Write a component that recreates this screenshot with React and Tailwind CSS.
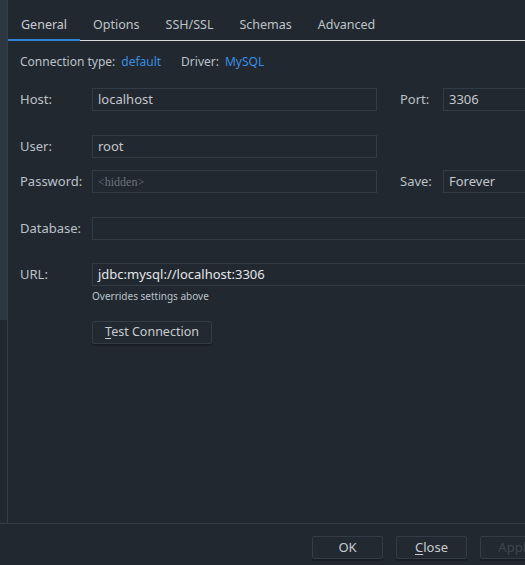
const tabs = ["General", "Options", "SSH/SSL", "Schemas", "Advanced"];

function Field({ value, placeholder, className = "", bright }) {
  return (
    <div
      className={`h-[23px] shrink-0 border border-[#323c46] bg-[#212830] flex items-center px-[5px] text-[13px] ${
        bright ? "text-[#e4e6e8]" : "text-[#c3c7cb]"
      } ${className}`}
    >
      {value}
      {placeholder && (
        <span className="text-[#6c737a] text-[12px]" style={{ fontFamily: '"Liberation Serif", "DejaVu Serif", serif' }}>
          {placeholder}
        </span>
      )}
    </div>
  );
}

function Label({ children, className = "" }) {
  return <span className={`shrink-0 text-[13px] text-[#bcc2c8] ${className}`}>{children}</span>;
}

function Btn({ children, disabled }) {
  return (
    <button
      className={`h-[23px] w-[71px] shrink-0 rounded-[2px] border border-[#343d47] bg-[#222931] shadow-[0_2px_1px_rgba(0,0,0,0.25)] text-[13px] ${
        disabled ? "text-[#3e464f]" : "text-[#c8ccd0]"
      }`}
    >
      {children}
    </button>
  );
}

export default function App() {
  return (
    <div
      className="w-[525px] h-[565px] overflow-hidden bg-[#212830] flex flex-col"
      style={{ fontFamily: '"Noto Sans", "Open Sans", sans-serif' }}
    >
      <div className="flex h-[524px] shrink-0 border-b border-[#323c46]">
        {/* scroll strip */}
        <div className="w-[8px] shrink-0 border-r border-[#323c46] flex flex-col">
          <div className="h-[320px] bg-[#2d3740]" />
        </div>

        <div className="flex-1 min-w-0 overflow-hidden">
          {/* TABS */}
          <div className="flex h-[41px] border-b border-[#d8dadc]">
            {tabs.map((t, i) => (
              <div
                key={t}
                className={`px-[13px] flex items-center pt-[11px] text-[12.5px] ${
                  i === 0 ? "text-[#c9ccd0] border-b-2 border-[#2f7fd6] mb-[-1px]" : "text-[#bfc3c7]"
                }`}
              >
                {t}
              </div>
            ))}
          </div>

          <div className="pl-[12px]">
            <div className="flex items-center h-[38px] text-[12px] text-[#bcc2c8] pt-[3px]">
              <span>Connection type:</span>
              <span className="ml-[6px] text-[#3c8ee0]">default</span>
              <span className="ml-[20px]">Driver:</span>
              <span className="ml-[6px] text-[#3c8ee0]">MySQL</span>
            </div>

            <div className="mt-[9px] flex items-center">
              <Label className="w-[72px]">Host:</Label>
              <Field value="localhost" className="w-[285px]" />
              <Label className="ml-[23px] w-[43px]">Port:</Label>
              <Field value="3306" className="w-[120px]" />
            </div>

            <div className="mt-[24px] flex items-center">
              <Label className="w-[72px]">User:</Label>
              <Field value="root" className="w-[285px]" />
            </div>

            <div className="mt-[12px] flex items-center">
              <Label className="w-[72px]">Password:</Label>
              <Field placeholder="<hidden>" className="w-[285px]" />
              <Label className="ml-[23px] w-[43px]">Save:</Label>
              <Field value="Forever" className="w-[120px]" />
            </div>

            <div className="mt-[24px] flex items-center">
              <Label className="w-[72px]">Database:</Label>
              <Field className="w-[480px]" />
            </div>

            <div className="mt-[23px] flex items-center">
              <Label className="w-[72px]">URL:</Label>
              <Field value="jdbc:mysql://localhost:3306" bright className="w-[480px]" />
            </div>

            <div className="ml-[72px] mt-[3px] text-[10px] text-[#bcc2c8] leading-[14px]">Overrides settings above</div>

            <div className="ml-[72px] mt-[15px]">
              <button className="h-[23px] w-[120px] rounded-[2px] border border-[#343d47] bg-[#222931] shadow-[0_2px_1px_rgba(0,0,0,0.25)] text-[12.5px] text-[#c8ccd0]">
                <span className="underline underline-offset-2">T</span>est Connection
              </button>
            </div>
          </div>
        </div>
      </div>

      {/* FOOTER */}
      <div className="flex-1 flex items-start pt-[12px] pl-[312px] gap-[13px]">
        <Btn>OK</Btn>
        <Btn>
          <span className="underline underline-offset-2">C</span>lose
        </Btn>
        <Btn disabled>Apply</Btn>
      </div>
    </div>
  );
}
